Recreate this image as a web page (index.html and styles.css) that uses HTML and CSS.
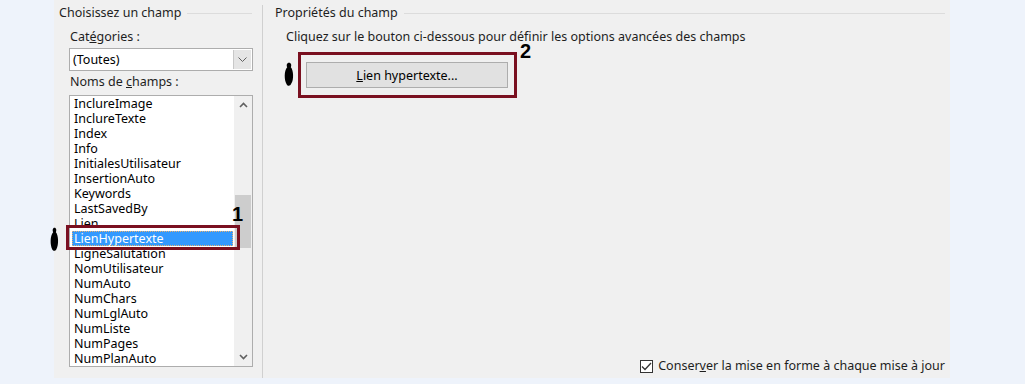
FILE: index.html
```html
<!DOCTYPE html>
<html lang="fr">
<head>
    <meta charset="UTF-8">
    <title>Champ</title>
    <link rel="stylesheet" href="styles.css">
</head>
<body>
    <div class="dialog">
        <div class="left-col">
            <div class="group-title"><span>Choisissez un champ</span></div>
            <div class="field-label">Cat<u>é</u>gories :</div>
            <div class="combo">
                <span class="combo-value">(Toutes)</span>
                <span class="combo-btn">
                    <svg width="9" height="5" viewBox="0 0 9 5"><path d="M0.5 0.5 L4.5 4.5 L8.5 0.5" fill="none" stroke="#606060" stroke-width="1"/></svg>
                </span>
            </div>
            <div class="field-label names-label">Noms de <u>c</u>hamps :</div>
            <div class="listbox">
                <div class="items">
                    <div class="item">InclureImage</div>
                    <div class="item">InclureTexte</div>
                    <div class="item">Index</div>
                    <div class="item">Info</div>
                    <div class="item">InitialesUtilisateur</div>
                    <div class="item">InsertionAuto</div>
                    <div class="item">Keywords</div>
                    <div class="item">LastSavedBy</div>
                    <div class="item">Lien</div>
                    <div class="item selected">LienHypertexte</div>
                    <div class="item">LigneSalutation</div>
                    <div class="item">NomUtilisateur</div>
                    <div class="item">NumAuto</div>
                    <div class="item">NumChars</div>
                    <div class="item">NumLglAuto</div>
                    <div class="item">NumListe</div>
                    <div class="item">NumPages</div>
                    <div class="item">NumPlanAuto</div>
                </div>
                <div class="scrollbar">
                    <svg class="arrow" width="9" height="6" viewBox="0 0 9 6"><path d="M1 5 L4.5 1.5 L8 5" fill="none" stroke="#606060" stroke-width="1.6"/></svg>
                    <div class="track"><div class="thumb"></div></div>
                    <svg class="arrow" width="9" height="6" viewBox="0 0 9 6"><path d="M1 1 L4.5 4.5 L8 1" fill="none" stroke="#606060" stroke-width="1.6"/></svg>
                </div>
                <div class="mark mark-box mark-box-1"></div>
                <div class="mark mark-num mark-num-1">1</div>
                <svg class="mark blob blob-1" width="9" height="25" viewBox="0 0 10 26"><path d="M5 0 C7 0 7.5 3 6.5 5 C9.5 8 10 19 7 24 C6 26 3.5 26 2.5 24 C0 19 0 9 3.5 5 C2.5 3 3 0 5 0Z" fill="#000"/></svg>
            </div>
        </div>
        <div class="separator"></div>
        <div class="right-col">
            <div class="group-title"><span>Propriétés du champ</span></div>
            <div class="hint">Cliquez sur le bouton ci-dessous pour définir les options avancées des champs</div>
            <div class="button-wrap">
                <button class="btn"><u>L</u>ien hypertexte...</button>
                <div class="mark mark-box mark-box-2"></div>
                <div class="mark mark-num mark-num-2">2</div>
                <svg class="mark blob blob-2" width="10" height="27" viewBox="0 0 11 26"><path d="M5.5 0 C8 0 8.5 3 7.5 5 C10.5 8 11 19 8 23 C7 26 4 26 3 24 C0 19 0 9 3.5 5 C2.5 3 3 0 5.5 0Z" fill="#000"/></svg>
            </div>
            <label class="keep">
                <span class="check">
                    <svg width="11" height="9" viewBox="0 0 11 9"><path d="M1 4.5 L4 7.5 L10 1" fill="none" stroke="#333" stroke-width="1.3"/></svg>
                </span>
                <span>Conser<u>v</u>er la mise en forme à chaque mise à jour</span>
            </label>
        </div>
    </div>
</body>
</html>
```

FILE: styles.css
```css
* {
    margin: 0;
    padding: 0;
    box-sizing: border-box;
}

body {
    font-family: 'Noto Sans', 'Liberation Sans', sans-serif;
    font-size: 12.5px;
    color: #000;
    background: #eef3fb;
    width: 1025px;
    height: 384px;
    overflow: hidden;
}

.dialog {
    margin-left: 54px;
    width: 896px;
    height: 378px;
    background: #f0f0f0;
    display: flex;
}

.left-col {
    width: 208px;
    padding: 5px 0 0 5px;
}

.group-title {
    display: flex;
    align-items: center;
    line-height: 16px;
    height: 16px;
    color: #1e1e1e;
    white-space: nowrap;
}

.group-title::after {
    content: "";
    flex: 1;
    height: 1px;
    background: #dcdcdc;
    margin-left: 6px;
}

.left-col .group-title {
    margin-right: 10px;
}

.field-label {
    margin: 8px 0 0 11px;
    line-height: 16px;
    color: #1e1e1e;
}

.names-label {
    margin-top: 3px;
}

.combo {
    margin: 3px 0 0 10px;
    width: 184px;
    height: 23px;
    border: 1px solid #adadad;
    background: #fff;
    display: flex;
}

.combo-value {
    flex: 1;
    padding-left: 3px;
    line-height: 21px;
}

.combo-btn {
    width: 18px;
    margin: 1px;
    background: #e5e5e5;
    border-left: 1px solid #c8c8c8;
    display: flex;
    align-items: center;
    justify-content: center;
}

.listbox {
    position: relative;
    margin: 5px 0 0 10px;
    width: 184px;
    height: 272px;
    border: 1px solid #adadad;
    background: #fff;
    display: flex;
}

.items {
    flex: 1;
    padding: 0 0 0 2px;
}

.item {
    height: 15px;
    line-height: 15px;
    padding-left: 2px;
    white-space: nowrap;
}

.item.selected {
    background: #3399ff;
    color: #fff;
    outline: 1px dotted #e8b070;
    outline-offset: -1px;
    margin-right: 1px;
}

.scrollbar {
    width: 18px;
    background: #f0f0f0;
    display: flex;
    flex-direction: column;
    align-items: center;
}

.scrollbar .arrow {
    margin: 6px 0;
}

.track {
    flex: 1;
    width: 100%;
    padding-top: 81px;
}

.thumb {
    margin: 0 1px;
    height: 53px;
    background: #cdcdcd;
}

.separator {
    width: 1px;
    background: #d0d0d0;
    margin-top: 5px;
}

.right-col {
    flex: 1;
    padding: 5px 5px 4px 12px;
    display: flex;
    flex-direction: column;
}

.hint {
    margin: 8px 0 0 11px;
    line-height: 16px;
    color: #1e1e1e;
    white-space: nowrap;
}

.button-wrap {
    position: relative;
    margin: 17px 0 0 31px;
    width: 202px;
}

.btn {
    width: 202px;
    height: 26px;
    font-family: inherit;
    font-size: 12.5px;
    color: #000;
    background: #e1e1e1;
    border: 1px solid #adadad;
}

.keep {
    margin-top: auto;
    align-self: flex-end;
    display: flex;
    align-items: center;
    gap: 5px;
    line-height: 16px;
    color: #1e1e1e;
    white-space: nowrap;
}

.check {
    width: 13px;
    height: 13px;
    border: 1px solid #333;
    background: #fff;
    display: flex;
    align-items: center;
    justify-content: center;
}

/* annotations drawn on top of the screenshot */
.mark {
    position: absolute;
}

.mark-box {
    border: 3px solid #7a1020;
}

.mark-box-1 {
    left: -4px;
    top: 129px;
    width: 174px;
    height: 25px;
}

.mark-box-2 {
    left: -8px;
    top: -10px;
    width: 219px;
    height: 46px;
}

.mark-num {
    font-family: 'Liberation Sans', sans-serif;
    font-weight: bold;
    font-size: 20px;
    line-height: 20px;
}

.mark-num-1 {
    left: 162px;
    top: 108px;
}

.mark-num-2 {
    left: 214px;
    top: -21px;
}

.blob-1 {
    left: -20px;
    top: 131px;
}

.blob-2 {
    left: -22px;
    top: -1px;
}
```
